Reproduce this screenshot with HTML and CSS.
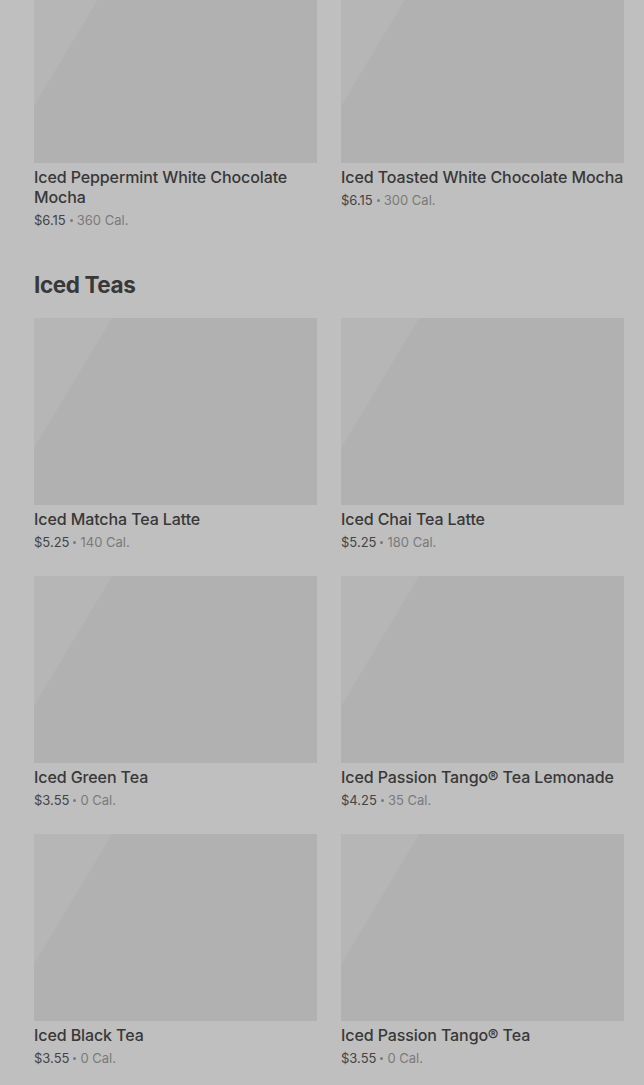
FILE: index.html
```html
<!DOCTYPE html>
<html lang="en">
<head>
    <meta charset="UTF-8">
    <meta name="viewport" content="width=device-width, initial-scale=1">
    <title>Menu</title>
    <link rel="stylesheet" href="styles.css">
</head>
<body>
<main class="menu">
    <div class="grid grid-top">
        <div class="item">
            <div class="thumb"></div>
            <h3 class="item-name">Iced Peppermint White Chocolate Mocha</h3>
            <p class="item-meta"><span>$6.15</span><span class="dot"></span><span class="cal">360 Cal.</span></p>
        </div>
        <div class="item">
            <div class="thumb"></div>
            <h3 class="item-name">Iced Toasted White Chocolate Mocha</h3>
            <p class="item-meta"><span>$6.15</span><span class="dot"></span><span class="cal">300 Cal.</span></p>
        </div>
    </div>

    <section class="category">
        <h2 class="category-title">Iced Teas</h2>
        <div class="grid">
            <div class="item">
                <div class="thumb"></div>
                <h3 class="item-name">Iced Matcha Tea Latte</h3>
                <p class="item-meta"><span>$5.25</span><span class="dot"></span><span class="cal">140 Cal.</span></p>
            </div>
            <div class="item">
                <div class="thumb"></div>
                <h3 class="item-name">Iced Chai Tea Latte</h3>
                <p class="item-meta"><span>$5.25</span><span class="dot"></span><span class="cal">180 Cal.</span></p>
            </div>
            <div class="item">
                <div class="thumb"></div>
                <h3 class="item-name">Iced Green Tea</h3>
                <p class="item-meta"><span>$3.55</span><span class="dot"></span><span class="cal">0 Cal.</span></p>
            </div>
            <div class="item">
                <div class="thumb"></div>
                <h3 class="item-name">Iced Passion Tango® Tea Lemonade</h3>
                <p class="item-meta"><span>$4.25</span><span class="dot"></span><span class="cal">35 Cal.</span></p>
            </div>
            <div class="item">
                <div class="thumb"></div>
                <h3 class="item-name">Iced Black Tea</h3>
                <p class="item-meta"><span>$3.55</span><span class="dot"></span><span class="cal">0 Cal.</span></p>
            </div>
            <div class="item">
                <div class="thumb"></div>
                <h3 class="item-name">Iced Passion Tango® Tea</h3>
                <p class="item-meta"><span>$3.55</span><span class="dot"></span><span class="cal">0 Cal.</span></p>
            </div>
        </div>
    </section>
</main>
</body>
</html>
```

FILE: styles.css
```css
:root {
    --backdrop: #bfbfbf;
    --thumb: #b1b1b1;
    --thumb-light: #b6b6b6;
    --text-color: #383838;
    --muted: #7a7a7a;
}

body {
    margin: 0;
    background-color: var(--backdrop);
    font-family: Inter, "Noto Sans", sans-serif;
    color: var(--text-color);
    overflow: hidden;
}

.menu {
    padding: 0 20px 0 34px;
}

/* Product grid */
.grid {
    display: grid;
    grid-template-columns: 283px 283px;
    column-gap: 24px;
    row-gap: 25px;
}

.grid-top {
    margin-top: -24px;
}

.thumb {
    height: 187px;
    background: linear-gradient(121deg, var(--thumb-light) 0%, var(--thumb-light) 19.5%, var(--thumb) 20%);
}

.item-name {
    margin: 4px 0 0;
    font-size: 16px;
    line-height: 20px;
    font-weight: 500;
    letter-spacing: -0.1px;
}

.item-meta {
    display: flex;
    align-items: center;
    gap: 4px;
    margin: 4px 0 0;
    height: 18px;
    font-size: 13px;
    line-height: 18px;
    color: #444;
}

.item-meta .dot {
    width: 3px;
    height: 3px;
    border-radius: 50%;
    background-color: var(--muted);
}

.item-meta .cal {
    color: var(--muted);
}

/* Category heading */
.category {
    margin-top: 40px;
}

.category-title {
    margin: 0 0 17px;
    font-size: 22.5px;
    line-height: 32px;
    font-weight: 700;
    letter-spacing: -0.4px;
}
```
